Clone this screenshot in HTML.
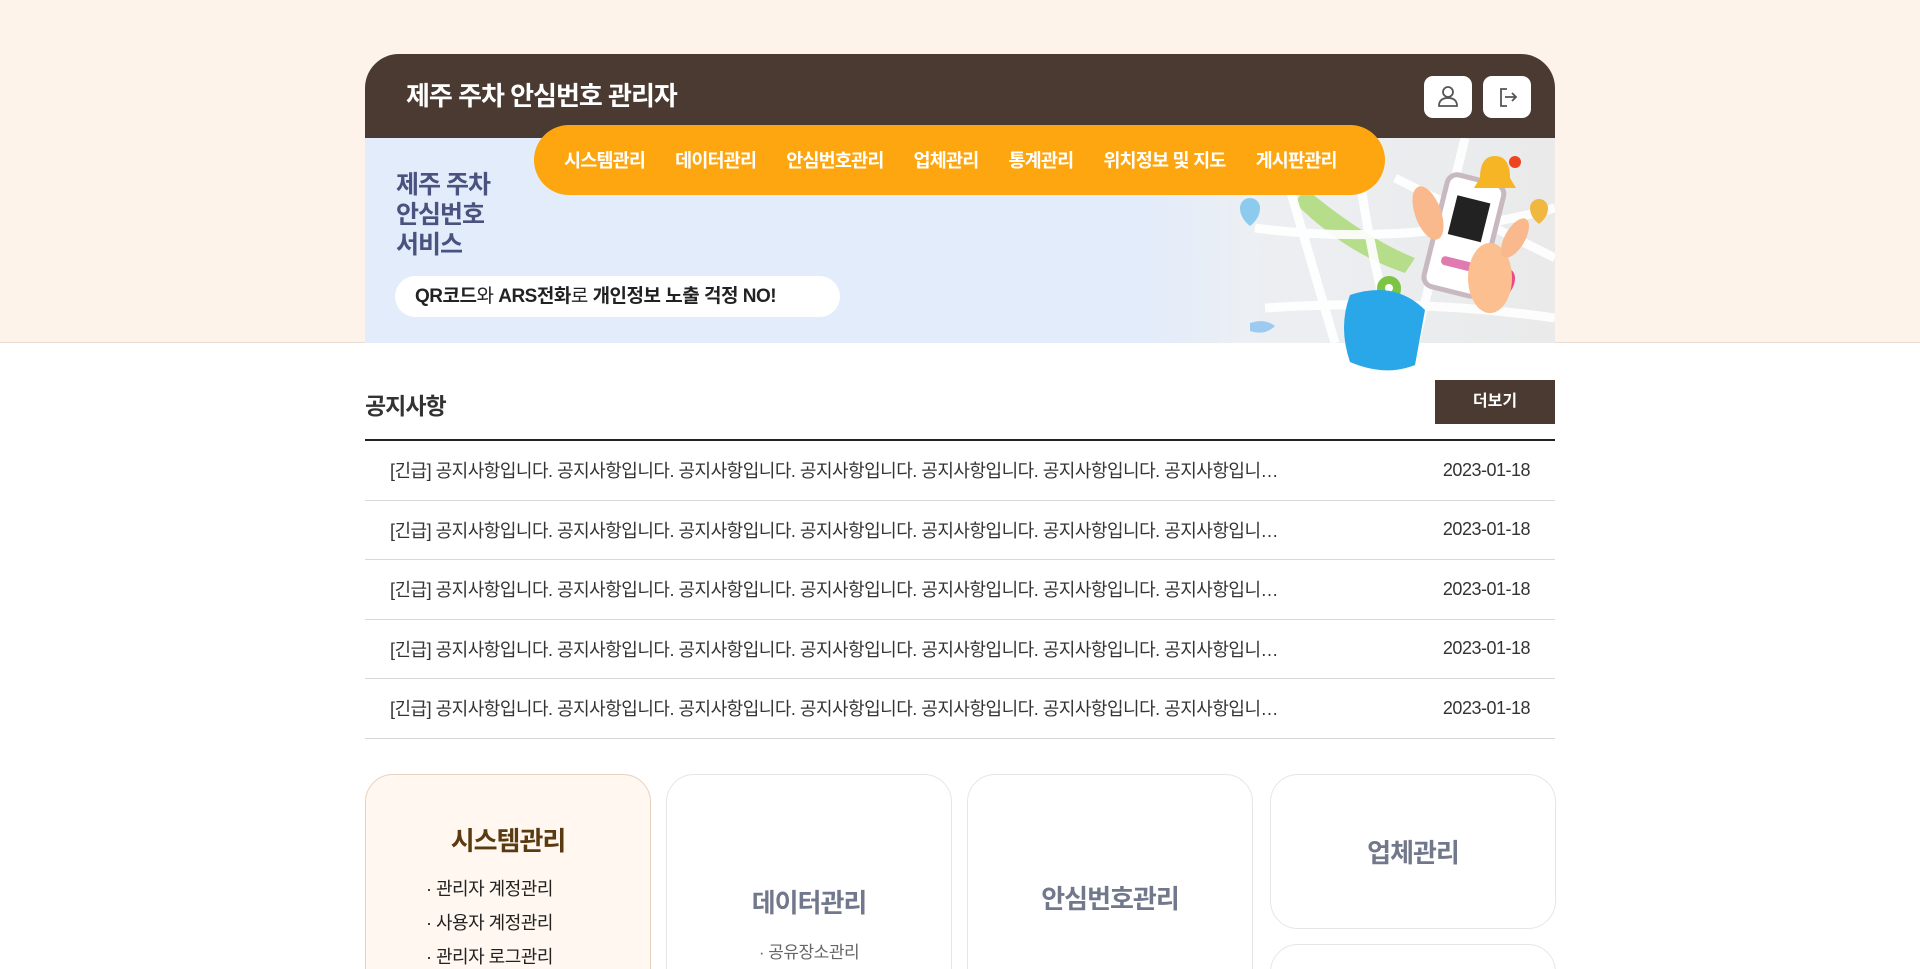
<!DOCTYPE html>
<html><head><meta charset="utf-8"><style>
*{margin:0;padding:0;box-sizing:border-box}
html,body{width:1920px;height:969px;overflow:hidden}
body{background:#fff;font-family:"Liberation Sans","Noto Sans CJK KR",sans-serif}
#w{position:relative;width:1920px;height:969px;overflow:hidden}
.top{position:absolute;left:0;top:0;width:1920px;height:343px;background:#fdf3ea;border-bottom:1px solid #eadccf}
.hdr{position:absolute;left:365px;top:54px;width:1190px;height:289px;border-radius:34px 34px 0 0;overflow:hidden;background:#e3ecfb}
.dark{position:absolute;left:0;top:0;width:100%;height:84px;background:#4a3a31}
.ttl{position:absolute;left:41px;top:22px;color:#fff;font-size:26px;font-weight:bold;letter-spacing:-1px;white-space:nowrap}
.ib{position:absolute;top:22px;width:48px;height:42px;background:#fff;border-radius:9px}
.nav{position:absolute;left:534px;top:125px;width:851px;height:70px;background:#fea60f;border-radius:35px;display:flex;align-items:center;padding-left:30px;white-space:nowrap}
.nav span{color:#fff;font-weight:bold;font-size:18.5px;letter-spacing:-0.8px;margin-right:30px;flex:none}
.bt{position:absolute;left:31px;top:116px;color:#4a5280;font-size:25px;font-weight:bold;line-height:30px;letter-spacing:-1px}
.pill{position:absolute;height:41px;width:445px;background:#fff;border-radius:21px;font-size:19px;line-height:41px;padding-left:20px;color:#222;letter-spacing:-0.5px;white-space:nowrap}
.pill b{font-weight:bold}
.nt{position:absolute;left:365px;top:387px;font-size:23px;font-weight:bold;color:#333;letter-spacing:-1px}
.more{position:absolute;left:1435px;top:380px;width:120px;height:44px;background:#4a3a31;color:#fff;font-size:16px;font-weight:bold;text-align:center;line-height:44px}
.list{position:absolute;left:365px;top:439px;width:1190px;border-top:2px solid #222}
.row{height:59.5px;border-bottom:1px solid #d8d8d8;display:flex;align-items:center;justify-content:space-between;padding:0 25px;font-size:18px;color:#333;letter-spacing:-0.5px;white-space:nowrap}
.card{position:absolute;top:774px;width:286px;height:400px;border:1px solid #e6e6e6;border-radius:28px;background:#fff;text-align:center}
.card h3{font-size:26px;color:#72788c;letter-spacing:-1px}
.card ul{list-style:none;font-size:18px;color:#222;line-height:34px;letter-spacing:-0.5px}
</style></head><body><div id="w">
<div class="top"></div>
<div class="hdr">
 <div class="dark"></div>
 <div class="ttl">제주 주차 안심번호 관리자</div>
 <div class="ib" style="left:1059px"><svg width="48" height="42" viewBox="0 0 48 42"><circle cx="24" cy="16" r="5" fill="none" stroke="#555" stroke-width="1.8"/><path d="M15 30c0-6 4-8 9-8s9 2 9 8z" fill="none" stroke="#555" stroke-width="1.8"/></svg></div>
 <div class="ib" style="left:1118px"><svg width="48" height="42" viewBox="0 0 48 42"><path d="M24 13h-6v17h6" fill="none" stroke="#555" stroke-width="1.8"/><path d="M22 21h11M29 17l4 4-4 4" fill="none" stroke="#555" stroke-width="1.8"/></svg></div>
 <svg style="position:absolute;left:780px;top:84px" width="410" height="205" viewBox="0 0 410 205">
  <defs><linearGradient id="f" x1="0" x2="1"><stop offset="0" stop-color="#e3ecfb"/><stop offset=".25" stop-color="#eceff3"/><stop offset="1" stop-color="#eaeaea"/></linearGradient></defs>
  <rect width="410" height="205" fill="url(#f)"/>
  <path d="M160 50q60 50 110 70l-10 15q-60-20-110-70z" fill="#b6dd8a"/>
  <g stroke="#fff" stroke-width="9" fill="none" opacity=".9">
   <path d="M130 0l60 205M210 0q10 100 40 205M320 0l-50 205M110 90q150 20 300-20M120 170q150-10 290 10M250 40l160 80"/>
  </g>
  <path d="M95 70a10 10 0 1 1 20 0q0 10-10 18q-10-8-10-18z" fill="#8ccbee"/>
  <path d="M232 150a12 12 0 1 1 24 0q0 12-12 22q-12-10-12-22z" fill="#7cc442"/><circle cx="244" cy="150" r="4" fill="#fff"/>
  <path d="M348 140a11 11 0 1 1 22 0q0 11-11 20q-11-9-11-20z" fill="#ec4a82"/>
  <path d="M385 70a9 9 0 1 1 18 0q0 9-9 16q-9-7-9-16z" fill="#f0b840"/>
  <path d="M105 185q15-5 25 3q-10 10-25 5z" fill="#9ccaf0"/>
  <rect x="290" y="40" width="58" height="115" rx="10" fill="#fff" stroke="#c8b8c0" stroke-width="5" transform="rotate(14 319 97)"/>
  <rect x="303" y="60" width="34" height="40" fill="#222" transform="rotate(14 319 97)"/>
  <rect x="303" y="122" width="32" height="9" rx="4" fill="#e07ab0" transform="rotate(14 319 97)"/>
  <path d="M335 40q0-22 15-22t15 22l6 10h-42z" fill="#f6b524"/><circle cx="370" cy="24" r="6" fill="#e42"/>
  <ellipse cx="283" cy="75" rx="13" ry="28" fill="#f9b98c" transform="rotate(-20 283 75)"/>
  <ellipse cx="345" cy="140" rx="22" ry="35" fill="#fbbf90"/>
  <ellipse cx="370" cy="100" rx="10" ry="22" fill="#f9b98c" transform="rotate(30 370 100)"/>
 </svg>
 <div class="bt">제주 주차<br>안심번호<br>서비스</div>
 <div class="pill" style="left:30px;top:222px"><b>QR코드</b>와 <b>ARS전화</b>로 <b>개인정보 노출 걱정 NO!</b></div>
</div>
<svg style="position:absolute;left:1320px;top:275px" width="130" height="130"><path d="M30 20q45-15 75 15l-10 55q-30 12-65-3q-12-35 0-67z" fill="#29a7e8"/></svg>
<div class="nav"><span>시스템관리</span><span>데이터관리</span><span>안심번호관리</span><span>업체관리</span><span>통계관리</span><span>위치정보 및 지도</span><span>게시판관리</span></div>
<div class="nt">공지사항</div>
<div class="more">더보기</div>
<div class="list">
 <div class="row"><span>[긴급] 공지사항입니다. 공지사항입니다. 공지사항입니다. 공지사항입니다. 공지사항입니다. 공지사항입니다. 공지사항입니…</span><span>2023-01-18</span></div>
 <div class="row"><span>[긴급] 공지사항입니다. 공지사항입니다. 공지사항입니다. 공지사항입니다. 공지사항입니다. 공지사항입니다. 공지사항입니…</span><span>2023-01-18</span></div>
 <div class="row"><span>[긴급] 공지사항입니다. 공지사항입니다. 공지사항입니다. 공지사항입니다. 공지사항입니다. 공지사항입니다. 공지사항입니…</span><span>2023-01-18</span></div>
 <div class="row"><span>[긴급] 공지사항입니다. 공지사항입니다. 공지사항입니다. 공지사항입니다. 공지사항입니다. 공지사항입니다. 공지사항입니…</span><span>2023-01-18</span></div>
 <div class="row"><span>[긴급] 공지사항입니다. 공지사항입니다. 공지사항입니다. 공지사항입니다. 공지사항입니다. 공지사항입니다. 공지사항입니…</span><span>2023-01-18</span></div>
</div>
<div class="card" style="left:365px;background:#fff7f0;border-color:#e6d2bf"><h3 style="color:#5a3a10;margin-top:46px">시스템관리</h3><ul style="margin-top:14px;text-align:left;padding-left:60px"><li>· 관리자 계정관리</li><li>· 사용자 계정관리</li><li>· 관리자 로그관리</li></ul></div>
<div class="card" style="left:666px"><h3 style="margin-top:108px">데이터관리</h3><ul style="margin-top:16px;font-size:17px;color:#666"><li>· 공유장소관리</li></ul></div>
<div class="card" style="left:967px"><h3 style="margin-top:104px">안심번호관리</h3></div>
<div class="card" style="left:1270px;height:155px"><h3 style="margin-top:58px">업체관리</h3></div>
<div class="card" style="left:1270px;top:944px;height:100px"></div>
</div></body></html>
